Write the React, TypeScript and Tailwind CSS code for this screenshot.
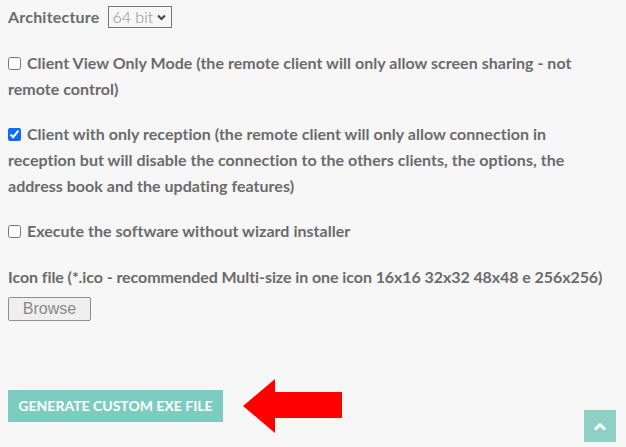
import React from 'react';

const options = [
  {
    label:
      'Client View Only Mode (the remote client will only allow screen sharing - not remote control)',
    checked: false,
  },
  {
    label:
      'Client with only reception (the remote client will only allow connection in reception but will disable the connection to the others clients, the options, the address book and the updating features)',
    checked: true,
  },
  {
    label: 'Execute the software without wizard installer',
    checked: false,
  },
];

const App = () => {
  return (
    <div className="relative min-h-[447px] w-full bg-[#f7f7f7] pl-2 pr-[12px] font-['Lato',sans-serif] text-[16px] leading-[26px] text-[#6b6b6b]">
      {/* Architecture */}
      <div className="flex items-center pt-[4px]">
        <span className="font-bold tracking-[0.2px]">Architecture</span>
        <div className="ml-[9px] flex h-[22px] w-[64px] items-center border border-[#767676] pl-[3px] text-[16px] font-light text-[#888]">
          <span className="leading-none">64 bit</span>
          <svg className="ml-[4px] mt-[1px]" width="9" height="7" viewBox="0 0 9 7">
            <path d="M1 1.5l3.5 3.5L8 1.5" fill="none" stroke="#444" strokeWidth="2" />
          </svg>
        </div>
      </div>

      {/* Options */}
      <div className="mt-[20px] flex flex-col gap-[19px] font-bold tracking-[0.03px]">
        {options.map((o) => (
          <label key={o.label} className="block">
            <input
              type="checkbox"
              defaultChecked={o.checked}
              className="mr-[6px] ml-0 inline-block h-[13px] w-[13px] align-[-1px] accent-[#0a6cff]"
            />
            {o.label}
          </label>
        ))}
      </div>

      {/* Icon file */}
      <div className="mt-[20px] font-bold tracking-[-0.08px]">
        Icon file (*.ico - recommended Multi-size in one icon 16x16 32x32 48x48 e 256x256)
      </div>
      <button className="mt-[7px] h-[24px] w-[83px] rounded-[2px] border border-[#8f8f8f] bg-[#efefef] font-['Liberation_Sans',sans-serif] text-[16px] leading-none text-[#8a8a8a]">
        Browse
      </button>

      {/* Generate */}
      <div className="mt-[58px] flex items-center">
        <button className="h-[32px] w-[215px] bg-[#7ccdc0] text-[14px] font-bold leading-none text-white">
          GENERATE CUSTOM EXE FILE
        </button>
        <svg className="ml-[20px]" width="100" height="54" viewBox="0 0 100 54">
          <polygon points="0,27 32,0 32,13 99,13 99,39 32,39 32,54" fill="#ff0000" />
        </svg>
      </div>

      {/* Back to top */}
      <button className="absolute right-[10px] top-[410px] flex h-[32px] w-[32px] items-center justify-center bg-[#8fd0c7]">
        <svg width="14" height="9" viewBox="0 0 14 9">
          <path d="M2 7.5l5-5 5 5" fill="none" stroke="#fff" strokeWidth="3" />
        </svg>
      </button>
    </div>
  );
};

export default App;
